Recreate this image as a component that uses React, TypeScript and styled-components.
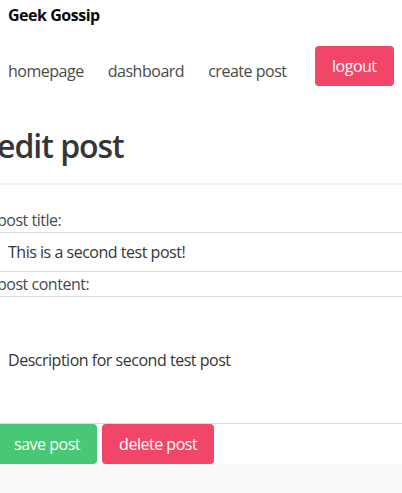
import React from "react";
import styled, { createGlobalStyle } from "styled-components";

const Global = createGlobalStyle`
  html, body { margin: 0; padding: 0; background: #fafafa; }
  body { font-family: "Open Sans", "Noto Sans", "Liberation Sans", sans-serif; color: #4a4a4a; font-size: 16px; letter-spacing: -0.03em; overflow: hidden; }
  * { box-sizing: border-box; }
`;

const Page = styled.div`
  background: #fff;
  width: 402px;
`;

const Header = styled.header`
  display: flex;
  flex-direction: column;
  padding: 4px 8px 0 8px;
`;

const Brand = styled.div`
  font-weight: 700;
  font-size: 16px;
  color: #0a0a0a;
  line-height: 22px;
`;

const Nav = styled.nav`
  display: flex;
  align-items: flex-end;
  margin-top: 20px;
  height: 40px;
`;

const NavLink = styled.a`
  font-size: 16px;
  color: #4a4a4a;
  margin-right: 24px;
  line-height: 24px;
  margin-bottom: 3px;
  white-space: nowrap;
  text-decoration: none;
`;

const Button = styled.button<{ $tone: "danger" | "success" }>`
  height: 40px;
  border: none;
  border-radius: 4px;
  font-family: inherit;
  letter-spacing: inherit;
  font-size: 16px;
  color: #fff;
  padding: 0 17px;
  white-space: nowrap;
  background: ${(p) => (p.$tone === "danger" ? "#f14668" : "#48c774")};
  display: inline-flex;
  align-items: center;
  justify-content: center;
`;

const LogoutButton = styled(Button)`
  width: 80px;
  align-self: flex-start;
  margin-left: 4px;
`;

const Main = styled.main`
  margin-left: -3px;
  padding-top: 40px;
`;

const Title = styled.h1`
  margin: 0;
  font-size: 32px;
  font-weight: 600;
  line-height: 40px;
  letter-spacing: -0.032em;
  color: #363636;
`;

const Rule = styled.hr`
  border: none;
  background: #f5f5f5;
  height: 2px;
  margin: 17px 0 23px;
`;

const Form = styled.form`
  display: flex;
  flex-direction: column;
`;

const Label = styled.label`
  line-height: 24px;
  font-size: 16px;
  color: #4a4a4a;
`;

const Field = styled.div<{ $tall?: boolean }>`
  height: ${(p) => (p.$tall ? "128px" : "40px")};
  border-top: 1px solid #dbdbdb;
  border-bottom: 1px solid #dbdbdb;
  display: flex;
  align-items: center;
  padding-left: 11px;
  color: #363636;
  font-size: 16px;
`;

const Actions = styled.div`
  display: flex;
  gap: 5px;
`;

export default function App() {
  return (
    <Page>
      <Global />
      <Header>
        <Brand>Geek Gossip</Brand>
        <Nav>
          <NavLink>homepage</NavLink>
          <NavLink>dashboard</NavLink>
          <NavLink>create post</NavLink>
          <LogoutButton $tone="danger">logout</LogoutButton>
        </Nav>
      </Header>
      <Main>
        <Title>edit post</Title>
        <Rule />
        <Form>
          <Label>post title:</Label>
          <Field>This is a second test post!</Field>
          <Label>post content:</Label>
          <Field $tall>Description for second test post</Field>
          <Actions>
            <Button $tone="success" type="button">save post</Button>
            <Button $tone="danger" type="button">delete post</Button>
          </Actions>
        </Form>
      </Main>
    </Page>
  );
}
